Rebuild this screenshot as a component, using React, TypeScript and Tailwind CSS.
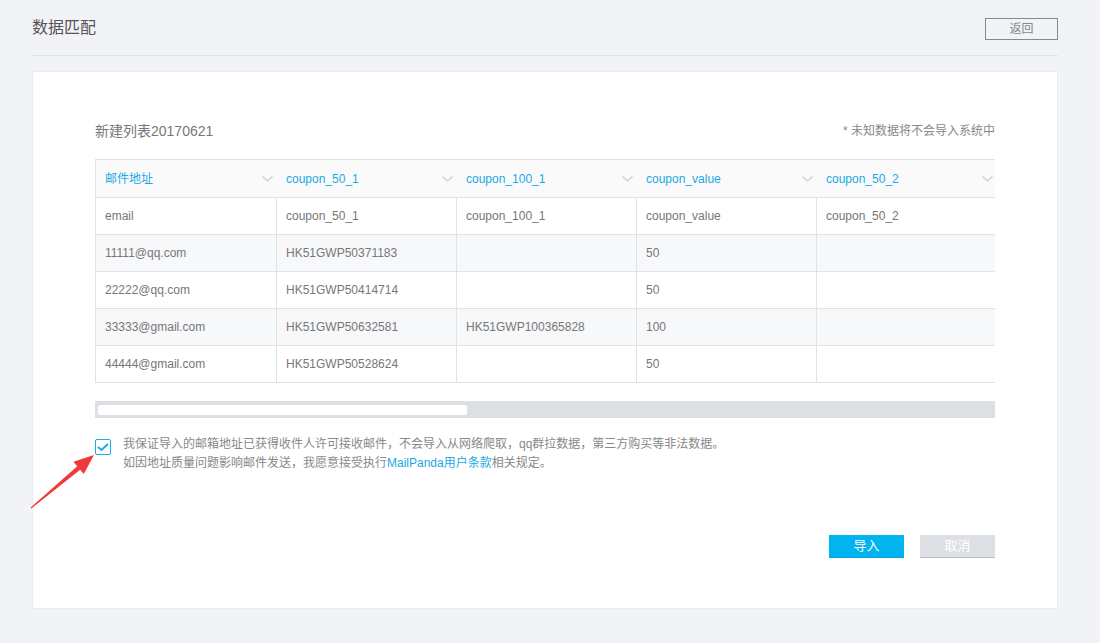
import React from 'react';

const font = { fontFamily: '"Liberation Sans", "Noto Sans CJK SC", sans-serif' };

const headers = ['邮件地址', 'coupon_50_1', 'coupon_100_1', 'coupon_value', 'coupon_50_2'];

const rows: string[][] = [
  ['email', 'coupon_50_1', 'coupon_100_1', 'coupon_value', 'coupon_50_2'],
  ['11111@qq.com', 'HK51GWP50371183', '', '50', ''],
  ['22222@qq.com', 'HK51GWP50414714', '', '50', ''],
  ['33333@gmail.com', 'HK51GWP50632581', 'HK51GWP100365828', '100', ''],
  ['44444@gmail.com', 'HK51GWP50528624', '', '50', ''],
];

const Chevron = () => (
  <svg width="11" height="6" viewBox="0 0 11 6" className="shrink-0">
    <polyline points="0.5,0.5 5.5,5 10.5,0.5" fill="none" stroke="#c9cdd3" strokeWidth="1.2" />
  </svg>
);

const App: React.FC = () => {
  return (
    <div className="relative h-[643px] w-[1100px] overflow-hidden bg-[#f2f3f7] pl-[32px] pr-[42px]" style={font}>
      {/* header */}
      <div className="flex h-[56px] items-start justify-between border-b border-[#e2e4e9] pt-[17px]">
        <h1 className="text-[16px] leading-[22px] text-[#555]">数据匹配</h1>
        <button className="mt-[1px] h-[22px] w-[73px] border border-[#7d8b97] text-[12px] leading-[20px] text-[#888]">
          返回
        </button>
      </div>

      {/* card */}
      <div className="mt-[15px] h-[538px] border border-[#eaecf0] bg-white px-[62px] pt-[49px]">
        <div className="flex h-[20px] items-center justify-between">
          <span className="text-[14px] text-[#777]">新建列表20170621</span>
          <span className="text-[12px] text-[#888]">* 未知数据将不会导入系统中</span>
        </div>

        {/* table */}
        <div className="mt-[18px] w-[900px] overflow-hidden border-l border-t border-[#dfe2e7]">
          <div className="flex h-[38px] w-[1100px] border-b border-[#dfe2e7] bg-[#fafafa]">
            {headers.map((h, j) => (
              <div
                key={h}
                className={`flex shrink-0 items-center justify-between pl-[9px] pr-[4px] ${j === 0 ? 'w-[181px]' : 'w-[180px]'}`}
              >
                <span className="text-[12px] text-[#1aa9e6]">{h}</span>
                <Chevron />
              </div>
            ))}
          </div>
          {rows.map((r, i) => (
            <div
              key={i}
              className={`flex h-[37px] w-[1100px] border-b border-[#dfe2e7] ${i % 2 === 1 ? 'bg-[#f7f8fa]' : 'bg-white'}`}
            >
              {r.map((c, j) => (
                <div
                  key={j}
                  className={`flex shrink-0 items-center border-r border-[#dfe2e7] pl-[9px] text-[12px] text-[#777] ${j === 0 ? 'w-[181px]' : 'w-[180px]'}`}
                >
                  {c}
                </div>
              ))}
            </div>
          ))}
        </div>

        {/* scrollbar */}
        <div className="mt-[18px] flex h-[17px] w-[900px] items-center bg-[#dcdfe3] px-[3px]">
          <div className="h-[10px] w-[369px] rounded-[2px] bg-white" />
        </div>

        {/* agreement */}
        <div className="mt-[17px] flex items-start">
          <div className="mt-[4px] flex h-[16px] w-[16px] shrink-0 items-center justify-center rounded-[2px] border-[1.5px] border-[#1aa9e6]">
            <svg width="12" height="10" viewBox="0 0 12 10">
              <polyline points="1,5 4.5,8 11,2" fill="none" stroke="#1aa9e6" strokeWidth="2" />
            </svg>
          </div>
          <div className="ml-[12px] text-[12px] leading-[19px] text-[#888]">
            <p>我保证导入的邮箱地址已获得收件人许可接收邮件，不会导入从网络爬取，qq群拉数据，第三方购买等非法数据。</p>
            <p>
              如因地址质量问题影响邮件发送，我愿意接受执行<a className="text-[#1aa9e6]">MailPanda用户条款</a>相关规定。
            </p>
          </div>
        </div>

        {/* actions */}
        <div className="mt-[62px] flex w-[900px] justify-end gap-[16px]">
          <button className="h-[23px] w-[75px] border-b border-[#0c9ed6] bg-[#00b4f0] text-[13px] text-white">导入</button>
          <button className="h-[23px] w-[75px] border-b border-[#b9bec6] bg-[#dcdfe3] text-[13px] text-white">取消</button>
        </div>
      </div>

      {/* annotation arrow */}
      <svg className="pointer-events-none absolute left-0 top-0" width="1100" height="643">
        <polygon points="31.3,508.4 30.7,507.6 77.5,466 80.5,469.5" fill="#f03a3a" />
        <polygon points="94,455 73.4,461.8 83.8,474" fill="#f03a3a" />
      </svg>
    </div>
  );
};

export default App;
